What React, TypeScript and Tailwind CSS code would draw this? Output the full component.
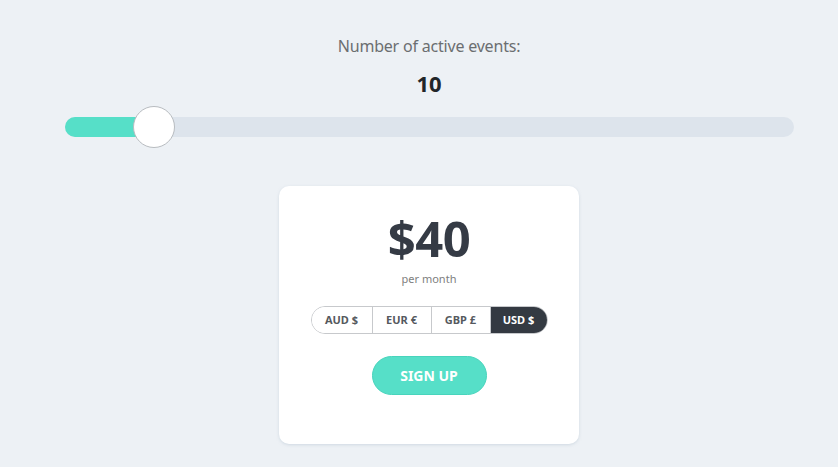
import React, { useState } from 'react';

const currencies = [
  { code: 'AUD', symbol: '$' },
  { code: 'EUR', symbol: '€' },
  { code: 'GBP', symbol: '£' },
  { code: 'USD', symbol: '$' },
];

export default function App() {
  const [events] = useState(10);
  const [currency, setCurrency] = useState('USD');

  return (
    <div
      className="min-h-screen bg-[#edf1f5] pt-[36px] pl-[20px]"
      style={{ fontFamily: '"Noto Sans", "Open Sans", sans-serif' }}
    >
      {/* Slider section */}
      <div className="flex flex-col items-center">
        <p className="text-[16px] leading-[20px] text-[#6b6e70] tracking-[-0.2px]">Number of active events:</p>
        <p className="mt-[14px] text-[22px] leading-[26px] font-bold text-[#222528]">{events}</p>
      </div>

      <div className="ml-[45px] mr-[44px] mt-[10px] h-[42px] flex items-center">
        <div className="relative w-full h-[20px] rounded-full bg-[#dde4ec]">
          <div className="h-full w-[100px] rounded-full bg-[#56dfc8]" />
          <div className="absolute left-[68px] top-[-11px] w-[42px] h-[42px] rounded-full bg-white border border-[#b8bcc0]" />
        </div>
      </div>

      {/* Pricing card */}
      <div className="flex justify-center mt-[38px]">
        <div className="w-[300px] h-[258px] bg-white rounded-[10px] shadow-[0_1px_3px_rgba(180,195,210,0.5)] flex flex-col items-center pt-[26px]">
          <p className="text-[49px] leading-[52px] font-bold text-[#353b45] tracking-[-0.5px]">$40</p>
          <p className="text-[11px] leading-[14px] text-[#808080] mt-[8px]">per month</p>

          <div className="mt-[20px] flex h-[28px] rounded-full border border-[#c7c9cc] overflow-hidden">
            {currencies.map((c, i) => (
              <button
                key={c.code}
                onClick={() => setCurrency(c.code)}
                className={
                  (currency === c.code
                    ? 'bg-[#343a42] text-white '
                    : 'bg-white text-[#55595e] ') +
                  (i > 0 ? 'border-l border-[#c7c9cc] ' : '') +
                  'text-[11px] font-bold ' +
                  (i === 0 ? 'w-[60px]' : i === 3 ? 'w-[57px]' : 'w-[59px]')
                }
              >
                {c.code} {c.symbol}
              </button>
            ))}
          </div>

          <button className="mt-[22px] w-[115px] h-[39px] rounded-full bg-[#56dfc8] border border-[#48d4bc] text-white text-[14px] font-bold">
            SIGN UP
          </button>
        </div>
      </div>
    </div>
  );
}
